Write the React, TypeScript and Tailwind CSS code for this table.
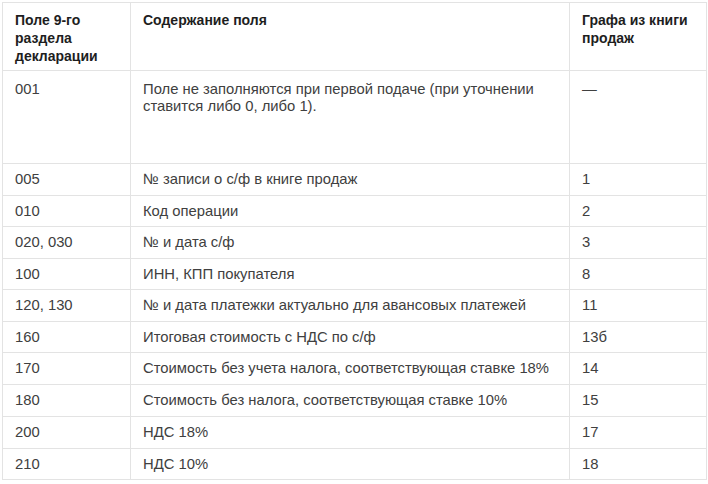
import React from "react";

type Row = {
    field: string;
    content: string[];
    column: string;
    h: string;
}

const rows: Row[] = [
    { field: "001", content: ["Поле не заполняются при первой подаче (при уточнении", "ставится либо 0, либо 1)."], column: "—", h: "h-[93px]" },
    { field: "005", content: ["№ записи о с/ф в книге продаж"], column: "1", h: "h-[32px]" },
    { field: "010", content: ["Код операции"], column: "2", h: "h-[31px]" },
    { field: "020, 030", content: ["№ и дата с/ф"], column: "3", h: "h-[32px]" },
    { field: "100", content: ["ИНН, КПП покупателя"], column: "8", h: "h-[31px]" },
    { field: "120, 130", content: ["№ и дата платежки актуально для авансовых платежей"], column: "11", h: "h-[32px]" },
    { field: "160", content: ["Итоговая стоимость с НДС по с/ф"], column: "13б", h: "h-[31px]" },
    { field: "170", content: ["Стоимость без учета налога, соответствующая ставке 18%"], column: "14", h: "h-[32px]" },
    { field: "180", content: ["Стоимость без налога, соответствующая ставке 10%"], column: "15", h: "h-[32px]" },
    { field: "200", content: ["НДС 18%"], column: "17", h: "h-[32px]" },
    { field: "210", content: ["НДС 10%"], column: "18", h: "h-[31px]" },
]

export default function App() {
    const cell = "border border-[#e3e3e3] px-3"
    const head = "border border-[#e3e3e3] px-3 align-top pt-[8px] text-left font-bold text-[14px] leading-[18px] text-[#1e1e1e]"

    return (
        <div className="w-[708px] h-[484px] bg-white overflow-hidden pt-[2px] pl-[2px]" style={{ fontFamily: '"Liberation Sans", Arial, sans-serif' }}>
            <table className="border-collapse table-fixed w-[704px] text-[14.8px] leading-[17px] text-[#404040]">
                <colgroup>
                    <col className="w-[128px]" />
                    <col className="w-[439px]" />
                    <col className="w-[137px]" />
                </colgroup>
                <thead>
                    <tr className="h-[68px]">
                        <th className={head}>Поле 9-го<br />раздела<br />декларации</th>
                        <th className={head}>Содержание поля</th>
                        <th className={head}>Графа из книги<br />продаж</th>
                    </tr>
                </thead>
                <tbody>
                    {rows.map((row, i) => {
                        const pos = i === 0 ? "align-top pt-[10px]" : "align-middle py-0"
                        return (
                            <tr key={row.field} className={row.h}>
                                <td className={`${cell} ${pos}`}>{row.field}</td>
                                <td className={`${cell} ${pos}`}>
                                    {row.content.map((line) => (
                                        <div key={line}>{line}</div>
                                    ))}
                                </td>
                                <td className={`${cell} ${pos}`}>{row.column}</td>
                            </tr>
                        )
                    })}
                </tbody>
            </table>
        </div>
    )
}
